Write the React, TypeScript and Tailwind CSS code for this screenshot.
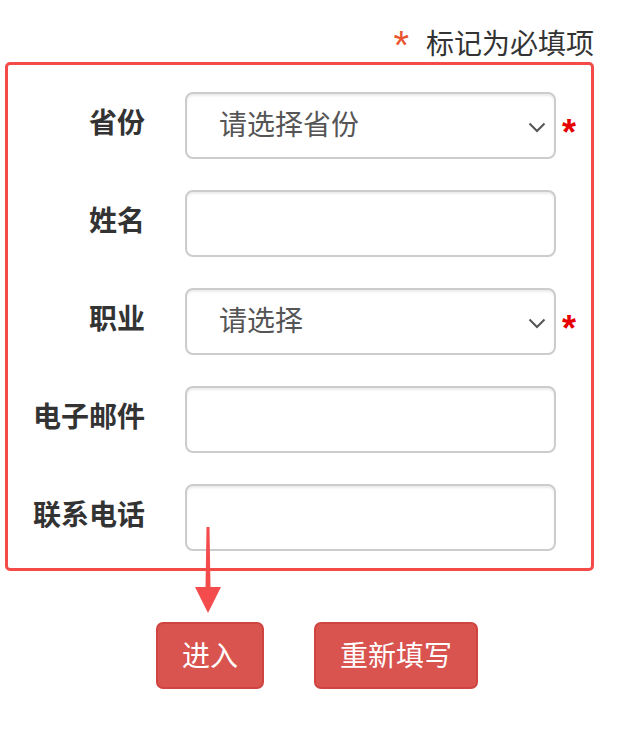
import React from "react";

const font = { fontFamily: '"Noto Sans CJK SC", "Noto Sans", sans-serif' };

function Chevron() {
  return (
    <svg width="18" height="11" viewBox="0 0 18 11" className="absolute right-[8px] top-[28px]">
      <path d="M1.5 1.5 L9 9 L16.5 1.5" fill="none" stroke="#555" strokeWidth="2" />
    </svg>
  );
}

function Row({ label, select, placeholder, required }: { label: string; select?: boolean; placeholder?: string; required?: boolean }) {
  return (
    <div className="flex items-center">
      <div className="w-[137px] text-right text-[28px] font-bold text-[#333] leading-none mb-[10px]">{label}</div>
      <div className="ml-[40px] relative w-[371px] h-[67px] rounded-[8px] border-2 border-[#cccccc] bg-white shadow-[inset_0_2px_2px_rgba(0,0,0,0.075)] flex items-center">
        {select && (
          <>
            <span className="pl-[32px] text-[28px] text-[#555] leading-none mb-[5px]">{placeholder}</span>
            <Chevron />
          </>
        )}
      </div>
      {required && (
        <span className="ml-[6px] mt-[14px] text-[36px] font-bold text-[#e60000] leading-none" style={{ fontFamily: '"Liberation Sans", sans-serif' }}>*</span>
      )}
    </div>
  );
}

export default function App() {
  return (
    <div className="relative w-[624px] h-[734px] bg-white" style={font}>
      <div className="pl-[5px] w-[595px]">
        <div className="flex justify-end items-start h-[62px] pt-[28px] pr-[1px]">
          <span className="text-[40px] text-[#e8552f] leading-none -mt-[3px]" style={{ fontFamily: '"Liberation Sans", sans-serif' }}>*</span>
          <span className="ml-[17px] text-[28px] text-[#333] leading-none">标记为必填项</span>
        </div>
        <div className="w-[589px] border-[3px] border-[#f54b48] rounded-[5px] pt-[27px] pb-[17px] flex flex-col gap-[31px]">
          <Row label="省份" select placeholder="请选择省份" required />
          <Row label="姓名" />
          <Row label="职业" select placeholder="请选择" required />
          <Row label="电子邮件" />
          <Row label="联系电话" />
        </div>
        <div className="flex pl-[151px] gap-[50px] mt-[51px]">
          <button className="w-[108px] h-[67px] rounded-[7px] border-2 border-[#cf4440] bg-[#d9534f] text-white text-[28px] leading-none pb-[3px]">进入</button>
          <button className="w-[164px] h-[67px] rounded-[7px] border-2 border-[#cf4440] bg-[#d9534f] text-white text-[28px] leading-none pb-[3px]">重新填写</button>
        </div>
      </div>
      <svg className="absolute left-[194px] top-[526px]" width="28" height="88" viewBox="0 0 28 88">
        <path d="M12.5 1 L15.5 1 L16.5 62 L11.5 62 Z" fill="#f44c4c" />
        <path d="M1 61 L27 61 L14 87 Z" fill="#f44c4c" />
      </svg>
    </div>
  );
}
